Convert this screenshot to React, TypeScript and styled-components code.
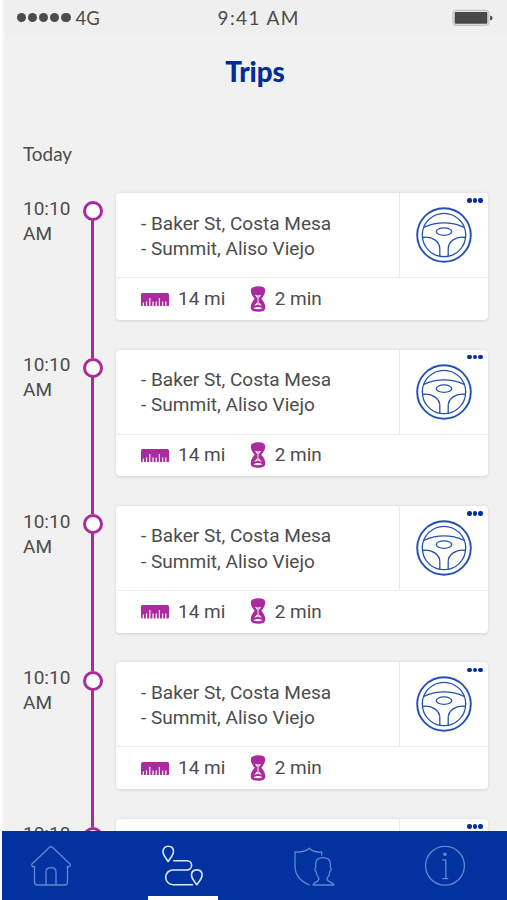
import React from "react";
import styled, { createGlobalStyle } from "styled-components";

const BLUE = "#0232a0";
const PURPLE = "#ab2a9d";
const INK = "#4c4c4c";

const GlobalStyle = createGlobalStyle`
  * { box-sizing: border-box; }
  body { margin: 0; background: #fff; }
`;

const Screen = styled.main`
  display: flex;
  flex-direction: column;
  width: 507px;
  height: 900px;
  padding-left: 2px;
  overflow: hidden;
  color: ${INK};
  font-family: Roboto, sans-serif;
`;

const Content = styled.div`
  display: flex;
  flex-direction: column;
  height: 831px;
  overflow: hidden;
  border-left: 2px solid #f8f8f8;
  background: #f1f1f1;
`;

const StatusBar = styled.header`
  display: grid;
  grid-template-columns: 200px 1fr auto;
  align-items: center;
  flex: none;
  height: 35px;
  padding: 0 14px 0 13px;
  background: #efefef;
  font: 18.5px/34px Lato, sans-serif;
`;

const Signal = styled.div`
  display: flex;
  align-items: center;
  gap: 5px;
`;

const Dots = styled.span<{ $size: number; $gap: number }>`
  display: flex;
  gap: ${(p) => p.$gap}px;

  i {
    width: ${(p) => p.$size}px;
    height: ${(p) => p.$size}px;
    border-radius: 50%;
    background: currentColor;
  }
`;

const Clock = styled.span`
  padding-left: 0.5px;
  font-size: 19px;
  line-height: 33px;
  letter-spacing: 1.4px;
`;

const Battery = styled.svg`
  justify-self: end;
`;

const Title = styled.h1`
  flex: none;
  margin: 19px 0 0;
  padding-right: 1px;
  color: #032d96;
  font: 900 27.8px/36px Lato, sans-serif;
  letter-spacing: -0.1px;
  text-align: center;
`;

const DayLabel = styled.h2`
  flex: none;
  margin: 52px 0 0;
  padding-left: 19px;
  font: 400 18.9px/24px Lato, sans-serif;
`;

const TripList = styled.ol`
  flex: none;
  margin: 27px 0 0;
  padding: 0;
  list-style: none;
`;

const TripRow = styled.li`
  display: grid;
  grid-template-columns: 59.5px 20px 371px;
  height: 156.4px;
  padding-left: 19px;
`;

const Time = styled.time`
  width: 50px;
  padding-top: 2.9px;
  font-size: 19px;
  line-height: 25.2px;
`;

const Rail = styled.div`
  display: flex;
  flex-direction: column;
  align-items: center;
`;

const RailLine = styled.span<{ $length?: number; $hidden?: boolean }>`
  flex: ${(p) => (p.$length ? `0 0 ${p.$length}px` : "1")};
  width: 3.6px;
  margin-top: -1px;
  background: ${(p) => (p.$hidden ? "transparent" : PURPLE)};
`;

const RailStop = styled.span`
  flex: none;
  width: 20px;
  height: 20px;
  border: 3px solid ${PURPLE};
  border-radius: 50%;
  background: #fff;
`;

const Card = styled.article`
  display: grid;
  grid-template: 84px 1fr / 1fr 89px;
  width: 371.5px;
  height: 126.6px;
  margin: 0.3px 0 0 13.5px;
  border-radius: 4px;
  background: #fff;
  box-shadow: 0 0.5px 3px rgba(0, 0, 0, 0.12);
`;

const Route = styled.div`
  padding: 17.3px 0 0 25px;
  font-size: 19.05px;
  line-height: 25.5px;
  white-space: nowrap;
`;

const Vehicle = styled.div`
  display: flex;
  flex-direction: column;
  align-items: flex-end;
  padding: 5.2px 5px 0 0;
  border-left: 1px solid #eaeaea;
  color: #032d96;
`;

const WheelSvg = styled.svg`
  flex: none;
  margin: 4.3px 11px 0 0;
`;

const Stats = styled.div`
  display: flex;
  grid-column: 1 / -1;
  align-items: center;
  padding: 0 0 1px 24.5px;
  border-top: 1px solid #ececec;
  font-size: 19px;
`;

const Stat = styled.span<{ $gap: number }>`
  display: flex;
  align-items: center;
  gap: ${(p) => p.$gap}px;
  margin-right: 24.5px;
  white-space: nowrap;
`;

const NavBar = styled.nav`
  display: grid;
  grid-template-columns: 14px 70px 62px 70px 61px 70px 61px 70px;
  height: 69px;
  background: ${BLUE};
`;

const NavItem = styled.a<{ $column: number; $active?: boolean }>`
  grid-column: ${(p) => p.$column};
  grid-row: 1;
  display: flex;
  justify-content: center;
  padding-top: 14px;
  border-bottom: 4.5px solid ${(p) => (p.$active ? "#fff" : "transparent")};
  color: ${(p) => (p.$active ? "#dce8ff" : "#6088d2")};
`;

const NavSvg = styled.svg<{ $weight?: number }>`
  flex: none;
  fill: none;
  stroke: currentColor;
  stroke-width: ${(p) => p.$weight ?? 1.3};
  stroke-linejoin: round;
  stroke-linecap: round;
`;

const Wheel = () => (
  <WheelSvg width="56" height="56" viewBox="0 0 56 56" fill="none" stroke="#2452ae" strokeWidth="1.3">
    <circle cx="28" cy="28" r="26.8" strokeWidth="1.9" />
    <circle cx="28" cy="28" r="21.7" />
    <path d="M7.8 20.3Q28 11.5 48.2 20.3" />
    <ellipse cx="28" cy="24.6" rx="7.8" ry="3.7" />
    <path d="M6.5 30.5C16 28.5 24 35 23.8 42V49.2M49.5 30.5C40 28.5 32 35 32.2 42V49.2" />
  </WheelSvg>
);

const RulerSvg = styled.svg`
  margin-top: 1.4px;
`;

const Ruler = () => (
  <RulerSvg width="28" height="13.5" viewBox="0 0 28 13.5">
    <rect width="28" height="13.5" rx="1.5" fill={PURPLE} />
    <path
      d="M2.3 14V9.5M5.5 14V8.5M8.8 14V5M12 14V8.5M15.2 14V8.5M18.4 14V5M21.6 14V8.5M24.8 14V8.5"
      stroke="#fff"
      strokeWidth="1.2"
    />
  </RulerSvg>
);

const Hourglass = () => (
  <svg width="16" height="26" viewBox="0 0 16 26">
    <path
      d="M8 .3C12.5.3 15.2 1.7 15.2 4.2C15.2 8 13.2 10.3 11.3 12.8C13.7 15.6 15.3 18 15.3 21.7C15.3 24.5 12.5 25.7 8 25.7S.7 24.5.7 21.7C.7 18 2.3 15.6 4.7 12.8C2.8 10.3.8 8 .8 4.2C.8 1.7 3.5.3 8 .3Z"
      fill={PURPLE}
    />
    <path d="M4.8 8.8Q8 10 11.2 8.8L8.7 12.2V16.2L12 20Q8 18.2 4 20L7.3 16.2V12.2Z" fill="#fff" />
    <path d="M3.4 22.3Q8 19.8 12.6 22.3Q8 24.4 3.4 22.3Z" fill="#fff" />
    <path d="M8 10V20" stroke={PURPLE} strokeWidth=".7" />
  </svg>
);

const HomeIcon = () => (
  <NavSvg width="42" height="44" viewBox="0 0 42 44">
    <path d="M4.5 21.5V37Q4.5 40 7.5 40H34.5Q37.5 40 37.5 37V21.5" />
    <path d="M4.5 22Q1 21.5 2 19L19 2.7Q21 .9 23 2.7L40 19Q41 21.5 37.5 22" />
    <path d="M16 40V27C16 23.8 18 22.6 21 22.6S26 23.8 26 27V40" />
  </NavSvg>
);

const RouteIcon = () => (
  <NavSvg $weight={1.6} width="42" height="44" viewBox="0 0 42 44">
    <path d="M6.2 16.5C4.2 13.5 1 10 1 6.8C1 3.5 3 1.3 6.2 1.3S11.5 3.5 11.5 6.8C11.5 10 8.2 13.5 6.2 16.5Z" />
    <path d="M11.8 15.7H25A4.65 4.65 0 0 1 25 25H11A7.35 7.35 0 0 0 11 39.7H30.5" />
    <path d="M34.8 39.7C32.5 36.7 29.5 33.4 29.5 30.3C29.5 27 31.6 24.9 34.8 24.9S40.1 27 40.1 30.3C40.1 33.4 37.1 36.7 34.8 39.7Z" />
  </NavSvg>
);

const ShieldIcon = () => (
  <NavSvg width="42" height="44" viewBox="0 0 42 44">
    <path d="M28.7 10V7Q20 7.5 16.3 3.3Q12 7.5 2 7V21C2 30 8 36.5 16.5 40" />
    <path d="M20 40C20.5 36.5 26.7 37.5 25.8 33.2C24.3 31.5 23.3 29 23 26.3Q20.8 24.5 22.7 22.4C22.2 15.5 24 12.7 30 12.7S37.8 15.5 37.3 22.4Q39.2 24.5 37 26.3C36.7 29 35.7 31.5 34.2 33.2C33.3 37.5 39.5 36.5 41 40Z" />
  </NavSvg>
);

const InfoIcon = () => (
  <NavSvg width="42" height="44" viewBox="0 0 42 44">
    <circle cx="21" cy="20.8" r="19.4" />
    <circle cx="21" cy="9.2" r="1.8" fill="currentColor" stroke="none" />
    <path d="M18.8 14.8H21.8V33.2M18.8 33.6H23.8" />
  </NavSvg>
);

const dots = (count: number) => Array.from({ length: count }, (_, i) => <i key={i} />);

const trips = Array.from({ length: 5 }, () => ({
  time: "10:10 AM",
  from: "Baker St, Costa Mesa",
  to: "Summit, Aliso Viejo",
  distance: "14 mi",
  duration: "2 min",
}));

export default function App() {
  return (
    <Screen>
      <GlobalStyle />
      <Content>
        <StatusBar>
          <Signal>
            <Dots $size={9.2} $gap={1.9}>{dots(5)}</Dots>
            <span>4G</span>
          </Signal>
          <Clock>9:41 AM</Clock>
          <Battery width="41" height="18" viewBox="0 0 41 18">
            <rect x="1" y="1.3" width="36" height="15" rx="3" fill="#e4e4e4" stroke="#bbb" />
            <rect x="2.7" y="3" width="32.6" height="11.8" rx="1" fill="#484848" />
            <path d="M38.2 6.5Q40.6 7 40.6 9T38.2 11.5Z" fill="#484848" />
          </Battery>
        </StatusBar>
        <Title>Trips</Title>
        <DayLabel>Today</DayLabel>
        <TripList>
          {trips.map((trip, index) => (
            <TripRow key={index}>
              <Time>{trip.time}</Time>
              <Rail>
                <RailLine $length={9.4} $hidden={index === 0} />
                <RailStop />
                <RailLine />
              </Rail>
              <Card>
                <Route>
                  <div>- {trip.from}</div>
                  <div>- {trip.to}</div>
                </Route>
                <Vehicle>
                  <Dots $size={4.5} $gap={1}>{dots(3)}</Dots>
                  <Wheel />
                </Vehicle>
                <Stats>
                  <Stat $gap={9.5}>
                    <Ruler />
                    {trip.distance}
                  </Stat>
                  <Stat $gap={8.8}>
                    <Hourglass />
                    {trip.duration}
                  </Stat>
                </Stats>
              </Card>
            </TripRow>
          ))}
        </TripList>
      </Content>
      <NavBar>
        <NavItem $column={2} aria-label="Home"><HomeIcon /></NavItem>
        <NavItem $column={4} $active aria-label="Trips"><RouteIcon /></NavItem>
        <NavItem $column={6} aria-label="Coverage"><ShieldIcon /></NavItem>
        <NavItem $column={8} aria-label="Information"><InfoIcon /></NavItem>
      </NavBar>
    </Screen>
  );
}
